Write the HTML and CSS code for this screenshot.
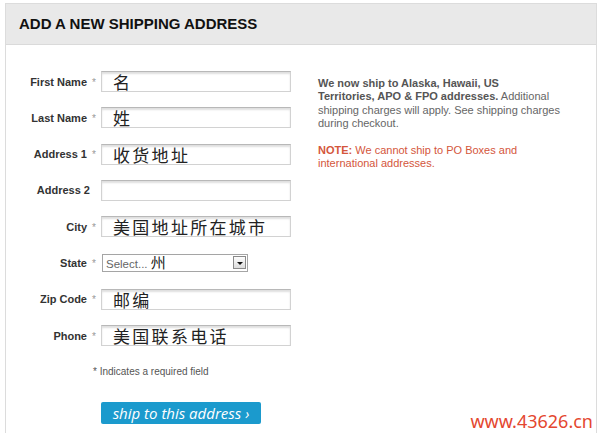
FILE: index.html
```html
<!DOCTYPE html>
<html lang="en">
<head>
    <meta charset="UTF-8">
    <title>Add a new shipping address</title>
    <link rel="stylesheet" href="styles.css">
</head>
<body>
    <div class="panel">
        <div class="panel-head">
            <h2>ADD A NEW SHIPPING ADDRESS</h2>
        </div>

        <div class="panel-body">
            <form class="address-form">
                <div class="row">
                    <label>First Name<span class="star">*</span></label>
                    <input type="text" value="名">
                </div>
                <div class="row">
                    <label>Last Name<span class="star">*</span></label>
                    <input type="text" value="姓">
                </div>
                <div class="row">
                    <label>Address 1<span class="star">*</span></label>
                    <input type="text" value="收货地址">
                </div>
                <div class="row">
                    <label>Address 2<span class="star blank"></span></label>
                    <input type="text" value="">
                </div>
                <div class="row">
                    <label>City<span class="star">*</span></label>
                    <input type="text" value="美国地址所在城市">
                </div>
                <div class="row">
                    <label>State<span class="star">*</span></label>
                    <div class="select">
                        <span class="select-text">Select... <span class="cjk">州</span></span>
                        <span class="select-arrow"></span>
                    </div>
                </div>
                <div class="row">
                    <label>Zip Code<span class="star">*</span></label>
                    <input type="text" value="邮编">
                </div>
                <div class="row">
                    <label>Phone<span class="star">*</span></label>
                    <input type="text" value="美国联系电话">
                </div>

                <p class="required-note">* Indicates a required field</p>

                <button type="button" class="ship-btn">ship to this address &#8250;</button>
            </form>

            <div class="info">
                <p class="info-text"><b>We now ship to Alaska, Hawaii, US<br>Territories, APO &amp; FPO addresses.</b> Additional<br>shipping charges will apply. See shipping charges<br>during checkout.</p>
                <p class="info-note"><b>NOTE:</b> We cannot ship to PO Boxes and<br>international addresses.</p>
            </div>
        </div>
    </div>

    <div class="watermark">www.43626.cn</div>
</body>
</html>
```

FILE: styles.css
```css
html, body {
     margin: 0;
     height: 100%;
     overflow: hidden;
     background: #fff;
     font-family: "Liberation Sans", Arial, sans-serif;
 }

body {
     position: relative;
 }

.panel {
     box-sizing: border-box;
     margin: 3px 3px 0 5px;
     border: 1px solid #dcdcdc;
     border-bottom: none;
     height: calc(100% - 3px);
 }

.panel-head {
     background-color: #e9e9e9;
     height: 40px;
     border-bottom: 1px solid #dadada;
     display: flex;
     align-items: center;
     padding-left: 13px;
 }

.panel-head h2 {
     margin: 0 0 1px;
     font-size: 15px;
     font-weight: bold;
     color: #111;
 }

.panel-body {
     display: flex;
     padding-top: 26px;
 }

.address-form {
     width: 286px;
 }

.row {
     display: flex;
     align-items: center;
     height: 21px;
     margin-bottom: 15.3px;
 }

.row label {
     width: 95px;
     flex-shrink: 0;
     text-align: right;
     font-size: 11px;
     font-weight: bold;
     color: #333;
 }

.star {
     display: inline-block;
     width: 14px;
     text-align: center;
     font-weight: normal;
     font-size: 10px;
     color: #999;
 }

.star.blank {
     width: 11px;
 }

.row input {
     box-sizing: border-box;
     width: 190px;
     height: 21px;
     margin: 0;
     padding: 0 0 0 11px;
     border: 1px solid #d2d2d2;
     border-top-color: #b8b8b8;
     box-shadow: inset 0 2px 2px rgba(0, 0, 0, 0.13);
     background: #fff;
     font-family: "Noto Sans CJK SC", sans-serif;
     font-size: 17px;
     letter-spacing: 2.3px;
     color: #222;
     outline: none;
 }

.cjk {
     font-family: "Noto Sans CJK SC", sans-serif;
     font-size: 15px;
     color: #222;
 }

.select {
     box-sizing: border-box;
     width: 146px;
     height: 18px;
     margin-left: 1px;
     border: 1px solid #a5a5a5;
     display: flex;
     align-items: center;
     justify-content: space-between;
     padding: 0 1px 0 3px;
     background: #fff;
 }

.select-text {
     font-size: 11.5px;
     color: #666;
     line-height: 16px;
 }

.select-arrow {
     width: 13px;
     height: 13px;
     box-sizing: border-box;
     border: 1px solid #8a8a8a;
     background: linear-gradient(#fdfdfd, #dcdcdc);
     display: flex;
     align-items: center;
     justify-content: center;
 }

.select-arrow::after {
     content: "";
     border-left: 3px solid transparent;
     border-right: 3px solid transparent;
     border-top: 3px solid #111;
     margin-top: 1px;
 }

.required-note {
     margin: 20px 0 0 87px;
     font-size: 10px;
     color: #555;
 }

.ship-btn {
     margin: 25px 0 0 95px;
     width: 160px;
     height: 22px;
     border: none;
     border-radius: 2px;
     background-color: #1b9acd;
     color: #fff;
     font-family: "Open Sans", sans-serif;
     font-style: italic;
     font-size: 15px;
     padding: 0;
     line-height: 20px;
 }

.info {
     margin-left: 26px;
     padding-top: 6px;
 }

.info p {
     margin: 0;
     font-size: 11px;
     line-height: 13.3px;
     white-space: nowrap;
 }

.info-text {
     color: #666;
 }

.info-text b {
     color: #555;
 }

.info-note {
     margin-top: 14px !important;
     color: #d4563c;
 }

.watermark {
     position: absolute;
     right: 7px;
     bottom: 3px;
     font-family: "Noto Sans", sans-serif;
     font-size: 18px;
     line-height: 18px;
     color: #e4472f;
 }
```
